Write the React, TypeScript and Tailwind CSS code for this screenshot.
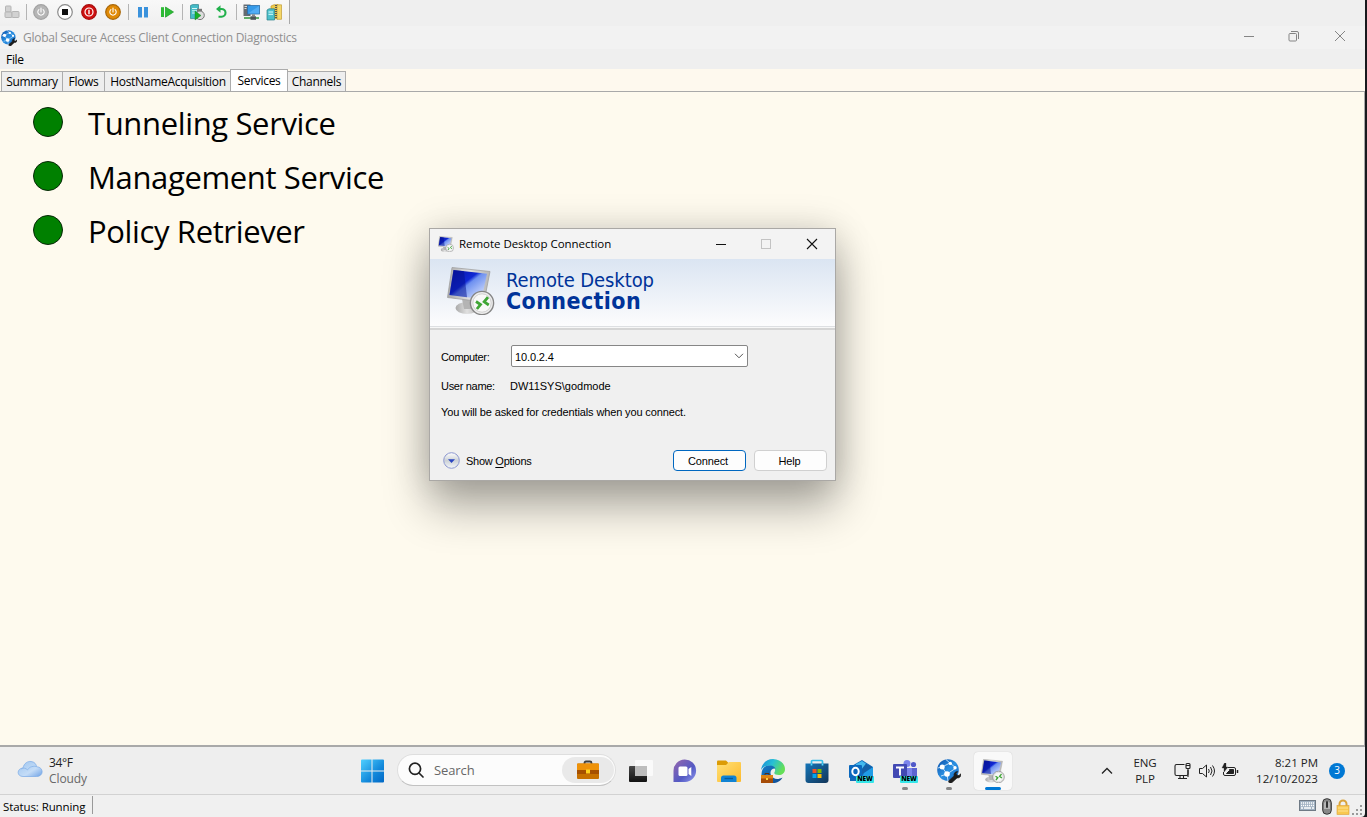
import React from "react";

type Kids = { children?: React.ReactNode };

const Cell = ({ children }: Kids) => (
  <div className="flex h-6 w-6 shrink-0 items-center justify-center">{children}</div>
);

const Sep = ({ wide = true }: { wide?: boolean }) => (
  <div className={wide ? "flex h-6 w-1.5 shrink-0 justify-center py-1" : "flex h-6 w-[5px] shrink-0 justify-center py-1"}>
    <div className="h-full w-px bg-[#b4b4b4]" />
  </div>
);

const PowerDisc = ({ ring, fill, mark }: { ring: string; fill: string; mark: "power" | "stop" | "circle" }) => (
  <svg width="16" height="16" viewBox="0 0 16 16">
    <circle cx="8" cy="8" r="7.3" fill={fill} stroke={ring} strokeWidth="1.2" />
    {mark === "stop" && <rect x="5" y="5" width="6" height="6" fill="#111" />}
    {mark === "power" && (
      <g fill="none" stroke="#fff" strokeWidth="1.1" strokeLinecap="round">
        <path d="M5.9 5.6a3.2 3.2 0 1 0 4.2 0" />
        <path d="M8 4v4" />
      </g>
    )}
    {mark === "circle" && (
      <g fill="none" stroke="#fff" strokeWidth="1.2">
        <circle cx="8" cy="8" r="4" />
        <path d="M8 5.8v4.4" strokeWidth="1.4" />
      </g>
    )}
  </svg>
);

const GlobeWrench = ({ size }: { size: number }) => (
  <svg width={size} height={size} viewBox="0 0 24 24">
    <defs>
      <linearGradient id="gw" x1="0" y1="0" x2="1" y2="1">
        <stop offset="0" stopColor="#0c4fa8" />
        <stop offset="0.5" stopColor="#2a90e2" />
        <stop offset="1" stopColor="#1669c4" />
      </linearGradient>
    </defs>
    <circle cx="11" cy="11" r="10.8" fill="url(#gw)" />
    <g stroke="#cfe6fa" fill="none" strokeWidth="0.9">
      <path d="M5 8 13 4 19 9 10 15 5 8M10 15 4 17M13 4 9 0.6M10 15l1 7M5 8 0.8 9" />
    </g>
    <g fill="#fff">
      <circle cx="5.2" cy="8" r="2.5" />
      <circle cx="13.3" cy="4.4" r="1.7" />
      <circle cx="10" cy="15" r="2.8" />
      <circle cx="18" cy="8.8" r="1.7" />
    </g>
    <path d="M12.5 23.8c-1-.3-1.2-1.6-.4-2.4l5-4.5c-.6-2.4 1-4.4 3.6-4.3l-1.6 2 .9 1.7 2 .2 1.8-1.8c.7 2.6-1.4 4.6-3.8 4.2l-5 4.6c-.7.6-1.7.6-2.5.3z" fill="#1c1c1c" stroke="#1c1c1c" strokeWidth=".7" />
  </svg>
);

const Rdp = ({ size, id }: { size: number; id: string }) => (
  <svg width={size} height={size} viewBox="0 0 48 48">
    <defs>
      <linearGradient id={id} x1="0" y1="0" x2="1" y2="1">
        <stop offset="0" stopColor="#0712a0" />
        <stop offset="0.42" stopColor="#1028d4" />
        <stop offset="0.5" stopColor="#6d90f0" />
        <stop offset="1" stopColor="#eef3ff" />
      </linearGradient>
      <linearGradient id={id + "b"} x1="0" y1="0" x2="1" y2="0">
        <stop offset="0" stopColor="#a9a9a9" />
        <stop offset="0.5" stopColor="#e0e0e0" />
        <stop offset="1" stopColor="#b6b6b6" />
      </linearGradient>
    </defs>
    <ellipse cx="20" cy="41" rx="11.5" ry="6" fill={`url(#${id}b)`} />
    <path d="M15 32h12l-2 10h-8z" fill="#b4b4b4" />
    <path d="M5 0.5 43 4.5 37 35 0.5 30.5z" fill={`url(#${id}b)`} stroke="#a0a0a0" strokeWidth=".8" />
    <path d="M6.5 3 40 6.8 34.6 32 2.5 28z" fill={`url(#${id})`} />
    <path d="M6.5 3 17 4.2 20 30.2 2.5 28z" fill="#04108e" opacity=".5" />
    <circle cx="35" cy="36" r="11.6" fill="#eee" stroke="#858585" strokeWidth="1.4" />
    <circle cx="35" cy="36" r="9.2" fill="#f8f8f8" stroke="#c6c6c6" strokeWidth=".8" />
    <path d="m29 34.5 4.5 3-3.6 4.5M41 30.2l-3.8 4.6 4.6 3.2" fill="none" stroke="#3fa535" strokeWidth="2.8" />
  </svg>
);

const Toolbar = () => (
  <div className="flex h-[26px] w-full shrink-0 bg-[#efefef]">
    <div className="flex h-6 w-[290px] items-start border-r border-[#a9a9a9] bg-gradient-to-b from-[#f8f8f8] to-[#f0f0f0]">
      <Cell>
        <svg width="16" height="14" viewBox="0 0 16 14" fill="#d2d2d2" stroke="#b5b5b5">
          <rect x="1.5" y="1" width="5.5" height="6" rx=".8" /><rect x="1" y="7" width="7" height="5.5" rx=".8" /><rect x="8" y="6.5" width="7" height="6" rx=".8" />
        </svg>
      </Cell>
      <Sep wide={false} />
      <Cell><PowerDisc ring="#a2a2a2" fill="#b5b5b5" mark="power" /></Cell>
      <Cell><PowerDisc ring="#8a8a8a" fill="#ffffff" mark="stop" /></Cell>
      <Cell><PowerDisc ring="#a80b0b" fill="#cf1111" mark="circle" /></Cell>
      <Cell><PowerDisc ring="#a8670a" fill="#e08a06" mark="power" /></Cell>
      <Sep />
      <Cell>
        <svg width="16" height="16" viewBox="0 0 16 16" fill="#3a92dc"><rect x="3" y="3" width="4" height="10.5" /><rect x="9" y="3" width="4" height="10.5" /></svg>
      </Cell>
      <Cell>
        <svg width="16" height="16" viewBox="0 0 16 16" fill="#2dbb35"><rect x="2" y="3.2" width="3" height="9.8" /><path d="M6.5 3 14.5 8 6.5 13.2z" stroke="#189a22" strokeWidth=".7" /></svg>
      </Cell>
      <Sep />
      <Cell>
        <svg width="16" height="17" viewBox="0 0 16 17">
          <path d="M1.5 1.5 3.5.6h6v14h-8z" fill="#45bcc8" stroke="#2b8089" strokeWidth=".7" />
          <path d="M3 4.5h5M3 6.8h5M3 9h3" stroke="#d7f7f5" />
          <rect x="8" y="4.8" width="5" height="3" fill="#777" />
          <circle cx="11" cy="11.3" r="4.3" fill="#ddd" stroke="#777" />
          <path d="M6 7 12 11.5 6 16z" fill="#18b028" stroke="#117a1b" strokeWidth=".4" />
        </svg>
      </Cell>
      <Cell>
        <svg width="16" height="16" viewBox="0 0 16 16"><path d="M6.500 5h2c2.200 0 4 1.500 4 3.800S10.700 12.700 8.500 12.700H5.500" fill="none" stroke="#22b14c" strokeWidth="2.1" /><path d="M7.500 1.200v7.600L3 5z" fill="#22b14c" /></svg>
      </Cell>
      <Sep />
      <Cell>
        <svg width="17" height="16" viewBox="0 0 17 16">
          <path d="M.5 .5h7v11.500h-7z" fill="#656b70" /><path d="M1.500 2.500h2.500M1.500 4.500h2" stroke="#ddd" />
          <rect x="4.5" y="1.5" width="12" height="8.5" fill="#3499e8" stroke="#2b6ea8" strokeWidth=".8" />
          <path d="M5 9.500 16 2v7.500z" fill="#70c0ff" opacity=".5" />
          <path d="M9 10.300h3v2H9z" fill="#888" /><path d="M1 14h15" stroke="#3b9a45" strokeWidth="1.6" /><rect x="7.5" y="12.3" width="5.5" height="3.5" fill="#4d5458" />
        </svg>
      </Cell>
      <Cell>
        <svg className="-translate-x-px" width="17" height="17" viewBox="0 0 17 17">
          <path d="M5 2 8 .7h4v14H5z" fill="#edc949" stroke="#b98f1e" strokeWidth=".6" /><path d="M11 .8h4.500v14.500H11z" fill="#f5d867" stroke="#b98f1e" strokeWidth=".6" />
          <path d="M10 1v14" stroke="#555" strokeWidth="2" strokeDasharray="1 1" />
          <path d="M1 6 3 4.800h5.500V16H1z" fill="#4cbfca" stroke="#2d8088" strokeWidth=".7" /><path d="M2.500 8h4.500M2.500 10.300h4.500" stroke="#dcffff" />
        </svg>
      </Cell>
    </div>
  </div>
);

const TitleBar = () => (
  <div className="flex h-[23px] w-full shrink-0 items-center bg-[#f2f2f2] pl-px">
    <GlobeWrench size={16} />
    <span className="ml-1.5 whitespace-nowrap pt-px text-[12px] tracking-[-0.26px] text-[#909090]">Global Secure Access Client Connection Diagnostics</span>
    <div className="ml-auto flex items-center pb-[3px] pr-[19px] text-[#858585]">
      <svg width="12" height="12" viewBox="0 0 12 12" stroke="currentColor"><path d="M1 6.500h10" /></svg>
      <svg className="ml-[33px]" width="12" height="12" viewBox="0 0 12 12" fill="none" stroke="currentColor"><rect x="1" y="3.5" width="7.5" height="7.5" rx="1" /><path d="M3 1.500h6a1.500 1.500 0 0 1 1.500 1.500v6" /></svg>
      <svg className="ml-[34px]" width="12" height="12" viewBox="0 0 12 12" stroke="currentColor"><path d="m1 1 10 10M11 1 1 11" /></svg>
    </div>
  </div>
);

const Tabs = () => (
  <div className="flex h-[22px] w-full shrink-0 items-end bg-[#fef9ee] pl-px text-[12px] tracking-[-0.3px] text-black">
    <div className="flex h-5 w-[62px] items-center justify-center border border-b-0 border-[#acacac] bg-[#eeeeee]">Summary</div>
    <div className="flex h-5 w-[42px] items-center justify-center border border-b-0 border-l-0 border-[#acacac] bg-[#eeeeee]">Flows</div>
    <div className="flex h-5 w-[125px] items-center justify-center border border-x-0 border-b-0 border-[#acacac] bg-[#eeeeee] pl-px">HostNameAcquisition</div>
    <div className="-mb-px flex h-[23px] w-[58px] items-center justify-center border border-b-0 border-[#acacac] bg-white">Services</div>
    <div className="flex h-5 w-[58px] items-center justify-center border border-b-0 border-l-0 border-[#acacac] bg-[#eeeeee]">Channels</div>
  </div>
);

const Service = ({ name }: { name: string }) => (
  <div className="flex h-[54px] items-center">
    <div className="h-[30px] w-[30px] rounded-full border border-[#082808] bg-[#008000]" />
    <span className="ml-[25px] whitespace-nowrap pt-0.5 text-[31px] leading-[40px] tracking-[-0.36px] text-black">{name}</span>
  </div>
);

const Dialog = () => (
  <div className="absolute left-[429px] top-[228px] flex h-[253px] w-[407px] flex-col border border-[#aaa8a5] bg-[#f0f0f0] font-['Liberation_Sans',sans-serif] text-[11px] tracking-[-0.13px] text-black shadow-[0_26px_42px_rgba(0,0,0,0.32),0_0_34px_rgba(0,0,0,0.15)]">
    <div className="flex h-[30px] shrink-0 items-center bg-[#f3f3f3] pl-2">
      <Rdp size={16} id="rd16" />
      <span className="ml-[5px] whitespace-nowrap font-['Open_Sans',sans-serif] text-[11.5px] tracking-[-0.04px]">Remote Desktop Connection</span>
      <div className="ml-auto flex items-center pb-px pr-[17px]">
        <svg width="12" height="12" viewBox="0 0 12 12" stroke="#111"><path d="M1 6.500h10" /></svg>
        <svg className="ml-[33px]" width="12" height="12" viewBox="0 0 12 12" fill="none" stroke="#c3c3c3"><rect x="1.5" y="1.5" width="9" height="9" /></svg>
        <svg className="ml-[34px]" width="12" height="12" viewBox="0 0 12 12" stroke="#111" strokeWidth="1.1"><path d="m1 1 10 10M11 1 1 11" /></svg>
      </div>
    </div>
    <div className="flex h-[67px] shrink-0 bg-gradient-to-b from-[#dbe5f2] to-[#fcfcfd] pl-[17px] pt-2">
      <Rdp size={48} id="rd48" />
      <div className="ml-[11px] flex flex-col whitespace-nowrap pt-0.5 font-['DejaVu_Sans_Condensed','DejaVu_Sans',sans-serif] text-[#003399]">
        <span className="text-[20px] leading-[22px] tracking-[-0.1px]">Remote Desktop</span>
        <span className="text-[23px] font-bold leading-[21px] tracking-[0.4px]">Connection</span>
      </div>
    </div>
    <div className="h-1 shrink-0 border-b-2 border-t border-b-[#d5d5d5] border-t-[#dddfe2] bg-[#f7f7f7]" />
    <div className="flex flex-1 flex-col pl-[11px] pr-2">
      <div className="mt-[15px] flex h-[22px] items-center">
        <span className="w-[70px] pt-0.5 tracking-[-0.33px]">Computer:</span>
        <div className="flex h-[22px] w-[237px] items-center justify-between rounded-[2px] border border-[#868686] bg-white pl-[3px] pr-[3px]">
          <span className="pt-0.5">10.0.2.4</span>
          <svg width="10" height="6" viewBox="0 0 10 6" fill="none" stroke="#555"><path d="m1 .8 4 4 4-4" /></svg>
        </div>
      </div>
      <div className="mt-[11px] flex h-4 items-center"><span className="w-[69px] tracking-[-0.3px]">User name:</span><span className="tracking-normal">DW11SYS\godmode</span></div>
      <div className="mt-2.5 h-4 whitespace-nowrap leading-4">You will be asked for credentials when you connect.</div>
      <div className="mt-[29px] flex h-[22px] items-center">
        <svg className="ml-0.5" width="17" height="17" viewBox="0 0 17 17">
          <defs><linearGradient id="opt" x1="0" y1="0" x2="0" y2="1"><stop offset="0" stopColor="#fff" /><stop offset=".5" stopColor="#ccd1d6" /><stop offset="1" stopColor="#f4f7fa" /></linearGradient></defs>
          <circle cx="8.5" cy="8.5" r="7.8" fill="url(#opt)" stroke="#8c97cf" /><path d="M5 7.300h7L8.500 11z" fill="#2a46c0" />
        </svg>
        <span className="ml-1.5 whitespace-nowrap pt-0.5 tracking-[-0.25px]">Show <span className="underline underline-offset-2">O</span>ptions</span>
        <button className="ml-auto h-[21px] w-[73px] rounded-[4px] border border-[#0067c0] bg-[#fdfdfd] pr-[3px] pt-0.5">Connect</button>
        <button className="ml-2 h-[21px] w-[73px] rounded-[4px] border border-[#d0d0d0] bg-[#fdfdfd] pr-0.5 pt-0.5">Help</button>
      </div>
    </div>
  </div>
);

const Task = ({ children, active, dot }: Kids & { active?: boolean; dot?: boolean }) => (
  <div className="relative flex h-12 w-11 shrink-0 items-center justify-center">
    {active && <div className="absolute left-[3px] top-[5px] h-[38px] w-[38px] rounded bg-[#f9f9f9] shadow-[0_0_1px_#bbb]" />}
    <div className="relative">{children}</div>
    {dot && <div className="absolute left-[19px] top-10 h-[3px] w-1.5 rounded-full bg-[#868686]" />}
    {active && <div className="absolute left-[14px] top-10 h-[3px] w-4 rounded-full bg-[#0078d4]" />}
  </div>
);

const NewBadge = () => (
  <span className="absolute left-2 top-[17px] flex h-[7px] w-[18px] items-center justify-center rounded-[1px] bg-[#35e5e8] text-[6.5px] font-extrabold leading-none text-black">NEW</span>
);

const Taskbar = () => (
  <div className="flex h-12 w-full shrink-0 border-b border-[#d2d2d2] bg-[#eeeeee] text-[12px]">
    <div className="flex w-[360px] items-center pl-[17px]">
      <svg className="mb-1" width="26" height="18" viewBox="0 0 26 18">
        <defs><linearGradient id="cl" x1="0" y1="0" x2="1" y2="1"><stop offset="0" stopColor="#9cc4ee" /><stop offset=".6" stopColor="#c4dcf7" /><stop offset="1" stopColor="#6fa2e5" /></linearGradient></defs>
        <path d="M6 16.500C-.500 16.500-.500 8.500 6 8 7 3 11 1 14 1.500c3.500.200 5.500 3 5.500 5.200C27 7 27 16.500 19.500 16.500z" fill="url(#cl)" stroke="#78a9e6" strokeWidth=".7" />
        <path d="M4 9c2-1.500 5-1 6.500 1 1-2 4-4.500 9-3.500" fill="none" stroke="#87b2e8" strokeWidth=".8" />
      </svg>
      <div className="ml-1.5 flex flex-col leading-4"><span className="tracking-[-0.35px] text-[#222]">34°F</span><span className="tracking-[-0.1px] text-[#686868]">Cloudy</span></div>
    </div>
    <div className="flex w-[37px] items-center">
      <svg width="24" height="24" viewBox="0 0 24 24">
        <defs><linearGradient id="win" x1="0" y1="0" x2="1" y2="1"><stop offset="0" stopColor="#4fd0ff" /><stop offset=".6" stopColor="#1389db" /><stop offset="1" stopColor="#0067c5" /></linearGradient></defs>
        <path d="M1 1.500q0-1 1-1h9.500V11.500H1zM12.500.500H23q1 0 1 1v10H12.500zM1 12.500h10.500V23.500H2q-1 0-1-1zM12.500 12.500H24V22.500q0 1-1 1H12.500z" fill="url(#win)" />
      </svg>
    </div>
    <div className="mb-2 mt-[7px] flex h-8 w-[219px] items-center rounded-full border border-[#dedede] border-b-[#c2c2c2] bg-[#fcfcfc] pl-2.5 pr-px">
      <svg width="16" height="16" viewBox="0 0 16 16" fill="none" stroke="#222" strokeWidth="1.7"><circle cx="7" cy="6.8" r="5.6" /><path d="m11 11 4 4" strokeLinecap="round" /></svg>
      <span className="ml-2.5 pt-px text-[13px] tracking-[-0.1px] text-[#676767]">Search</span>
      <div className="ml-auto flex h-[26px] w-[52px] items-center justify-center rounded-full bg-[#e9e9e9]">
        <svg width="24" height="20" viewBox="0 0 24 20">
          <path d="M8.500 4V3q0-1.500 1.500-1.500h4q1.500 0 1.500 1.500v1" fill="none" stroke="#3f3f3f" strokeWidth="1.8" />
          <rect x="1" y="3.5" width="22" height="15.5" rx="1" fill="#c67000" /><path d="M1 11V4.500q0-1 1-1h20q1 0 1 1V11z" fill="#ee9209" /><path d="M1 10h22v4H1z" fill="#a65000" /><rect x="10" y="9.5" width="4" height="4" fill="#ffd21f" />
        </svg>
      </div>
    </div>
    <div className="ml-[3px] flex">
      <Task>
        <svg width="26" height="24" viewBox="0 0 26 24">
          <defs><linearGradient id="tv" x1="0" y1="0" x2="0" y2="1"><stop offset="0" stopColor="#484848" /><stop offset="1" stopColor="#111" /></linearGradient></defs>
          <rect x="1" y="7" width="18" height="16" rx="1" fill="url(#tv)" /><rect x="7" y="1" width="18" height="16" rx="1" fill="#fafafa" /><path d="M7 7h12v10H7z" fill="#bdbdbd" />
        </svg>
      </Task>
      <Task>
        <svg width="24" height="24" viewBox="0 0 24 24">
          <defs><linearGradient id="ch" x1="0" y1="0" x2="1" y2="1"><stop offset="0" stopColor="#9867ad" /><stop offset=".6" stopColor="#545ac4" /><stop offset="1" stopColor="#929bf0" /></linearGradient></defs>
          <path d="M.500 23V12A11.300 11.300 0 1 1 12 23z" fill="url(#ch)" /><rect x="5.5" y="7.5" width="9" height="9.5" rx="1.5" fill="#fff" /><path d="m15.500 10 2.800-2v9l-2.800-2z" fill="#fff" />
        </svg>
      </Task>
      <Task>
        <svg width="26" height="24" viewBox="0 0 26 24">
          <defs><linearGradient id="fo" x1="0" y1="0" x2="1" y2="1"><stop offset="0" stopColor="#ffe177" /><stop offset="1" stopColor="#fdb92b" /></linearGradient></defs>
          <path d="M1 2.500q0-1 1-1h8l3 3v5H1z" fill="#dc9c05" /><path d="M1 6h9l3-3h11q1 0 1 1v18q0 1-1 1H2q-1 0-1-1z" fill="url(#fo)" /><path d="M5 23v-4q0-2.500 2.500-2.500h10.500q2.500 0 2.500 2.500v4z" fill="#1183d3" /><path d="M8.500 19.500h8.500" stroke="#075b9c" strokeWidth="1.3" />
        </svg>
      </Task>
      <Task>
        <svg width="26" height="26" viewBox="0 0 26 26">
          <defs>
            <linearGradient id="e1" x1="0" y1="0" x2="1" y2=".4"><stop offset="0" stopColor="#1688d8" /><stop offset=".5" stopColor="#27bfd5" /><stop offset="1" stopColor="#64df58" /></linearGradient>
            <linearGradient id="e2" x1="0" y1="0" x2="1" y2="1"><stop offset="0" stopColor="#147bc7" /><stop offset="1" stopColor="#114b91" /></linearGradient>
          </defs>
          <path d="M1 12c1-7 6-11 12-11 7 0 12 5 12 10 0 4-3 6-6 6-3.500 0-5.500-1-4.500-2.700 1-1.500 1.500-5.300-3.500-6.300-5-1-8 1-10 4z" fill="url(#e1)" />
          <path d="M1.500 16C2 9 6 7.500 10 7.500c3 0 5 1.500 5.500 3-4-.5-6 3-4.500 6.500s6 5.500 11.500 2.500C21 23 17 25 13 25 6 25 1 21 1.500 16z" fill="url(#e2)" />
          <rect x="1" y="17" width="12" height="8" fill="#a64c07" /><path d="M1 17h12v3.500H1z" fill="#dd8313" /><path d="M5 17v-1.500h4V17" fill="none" stroke="#553019" /><path d="M6 20h2v2H6z" fill="#ffd23f" />
        </svg>
      </Task>
      <Task>
        <svg width="24" height="24" viewBox="0 0 24 24">
          <defs><linearGradient id="st" x1="0" y1="0" x2="1" y2="1"><stop offset="0" stopColor="#1575b8" /><stop offset="1" stopColor="#123558" /></linearGradient></defs>
          <path d="M6.500 8V2.500q0-1 1-1h9q1 0 1 1V8" fill="none" stroke="#32bde9" strokeWidth="1.7" /><path d="M.500 4.500h23V21q0 3-3 3h-17q-3 0-3-3z" fill="url(#st)" /><path d="M6.500 4.500v2M17.500 4.500v2" stroke="#54dcff" strokeWidth="1.7" />
          <path d="M7.500 10h4v4h-4z" fill="#f25022" /><path d="M12.500 10h4v4h-4z" fill="#7fba00" /><path d="M7.500 15h4v4h-4z" fill="#00a4ef" /><path d="M12.500 15h4v4h-4z" fill="#ffb900" />
        </svg>
      </Task>
      <Task>
        <svg width="26" height="24" viewBox="0 0 26 24"><path d="M2 8 14 1l11 7v14H2z" fill="#126ab8" /><path d="M8 5 14 2l9 6-9 6-7-5z" fill="#43b8ee" /><path d="M18 4.500 25 8.500 14 15 13 11z" fill="#1560a8" /><path d="m16 14 9-6v14H12z" fill="#1f9ce6" /><rect x="1" y="6" width="13" height="13" rx="1" fill="#0b68bd" /><ellipse cx="7.5" cy="12.5" rx="3.2" ry="3.8" fill="none" stroke="#fff" strokeWidth="2" /></svg>
        <NewBadge />
      </Task>
      <Task dot>
        <svg width="26" height="24" viewBox="0 0 26 24"><circle cx="15" cy="4.5" r="3.5" fill="#7b83eb" /><circle cx="21.5" cy="5.5" r="2.6" fill="#5059c9" /><path d="M17 9h8v8q0 4-5 4h-3z" fill="#5d64d1" /><path d="M9 9h11v10q-2 5-8 3z" fill="#7b83eb" /><rect x="1" y="5" width="14" height="14" rx="1" fill="#4249b3" /><path d="M4 8.500h8M8 8.500v8" stroke="#fff" strokeWidth="1.9" /></svg>
        <NewBadge />
      </Task>
      <Task dot><GlobeWrench size={24} /></Task>
      <Task active><Rdp size={24} id="rd24" /></Task>
    </div>
    <div className="ml-auto flex items-center text-[#222]">
      <svg width="12" height="8" viewBox="0 0 12 8" fill="none" stroke="#222" strokeWidth="1.3"><path d="m1 6.500 5-5 5 5" /></svg>
      <div className="ml-5 flex w-6 flex-col items-center pt-px text-[11.5px] leading-4 tracking-[-0.1px]"><span>ENG</span><span>PLP</span></div>
      <svg className="ml-[17px]" width="18" height="18" viewBox="0 0 18 18" fill="none" stroke="#222" strokeWidth="1.1"><path d="M10.500 2.500h-8q-1.500 0-1.500 1.500v8q0 1.500 1.500 1.500h10q1.500 0 1.500-1.500V8M6 13.500v3M9.500 13.500v3M4 16.500h9" /><rect x="12" y="1.5" width="4" height="5" rx="1" /><path d="M14 6.500V15M12 3.500h4" /></svg>
      <svg className="ml-1.5" width="18" height="16" viewBox="0 0 18 16" fill="none" stroke="#222" strokeWidth="1"><path d="M1.500 5.500h3l4-3.500v12l-4-3.500h-3zM10.500 6q1.500 2 0 4M12.500 4q3 4 0 8M14.500 2.500q4 5.500 0 11" /></svg>
      <svg className="ml-[5px]" width="18" height="16" viewBox="0 0 18 16" fill="none" stroke="#222"><path d="M7 4.500h6q1.500 0 1.500 1.500v5q0 1.500-1.500 1.500H4q-1.500 0-1.500-1.500V9" /><path d="M8.500 6.500h4v4H5.500l3-3z" fill="#222" /><path d="M16.500 7v3" strokeWidth="1.5" /><path d="M3.500 0 1 5h2v4l4-5H5V0z" fill="#222" strokeWidth=".3" /></svg>
      <div className="ml-[15px] flex w-[64px] flex-col items-end whitespace-nowrap pt-px text-[11.5px] leading-4"><span>8:21 PM</span><span className="tracking-[0.1px]">12/10/2023</span></div>
      <div className="ml-[11px] mr-5 flex h-4 w-4 items-center justify-center rounded-full bg-[#0078d4] text-[10px] text-white">3</div>
    </div>
  </div>
);

const StatusBar = () => (
  <div className="flex h-[22px] w-full items-center bg-[#f0f0f0] pl-[3px] text-[12px] text-black">
    <span className="w-[89px] whitespace-nowrap pt-0.5 text-[11.5px] tracking-[-0.1px]">Status: Running</span>
    <div className="mb-[3px] h-[18px] w-px bg-[#999]" />
    <div className="ml-auto flex items-end">
      <svg className="mb-[3px]" width="17" height="12" viewBox="0 0 17 12"><rect x=".5" y=".5" width="16" height="10" fill="#9fb0c0" stroke="#6f7a85" /><path d="M2 3h13M2 5.500h13" stroke="#fff" strokeWidth="1.3" strokeDasharray="1.2 .8" /><path d="M2 8h2m1 0h7m1 0h2" stroke="#fff" strokeWidth="1.3" /></svg>
      <svg className="ml-1.5" width="10" height="17" viewBox="0 0 10 17"><rect x=".7" y=".7" width="8.6" height="15.5" rx="4" fill="#888" stroke="#333" /><path d="M2 5q3-4 6 0v6H2z" fill="#b6b6b6" /><rect x="4" y="3" width="2" height="7" rx="1" fill="#333" /></svg>
      <svg className="ml-1" width="14" height="16" viewBox="0 0 14 16"><path d="M3.500 7V5a3.500 3.500 0 0 1 7 0v2" fill="none" stroke="#d9a33b" strokeWidth="2" /><rect x="1" y="6.5" width="12" height="9" fill="#f8c850" stroke="#dca13a" strokeWidth=".6" /><path d="M2 9h10M2 12h10" stroke="#ffe291" /></svg>
      <svg className="-mb-px ml-0.5 mr-0.5" width="11" height="13" viewBox="0 0 11 13" fill="#999"><path d="M8 2h2v2H8zM4 6h2v2H4zM8 6h2v2H8zM0 10h2v2H0zM4 10h2v2H4zM8 10h2v2H8z" /></svg>
    </div>
  </div>
);

export default function App() {
  return (
    <div className="relative flex h-[817px] w-[1367px] overflow-hidden bg-[#18191d] font-['Open_Sans','Noto_Sans',sans-serif]">
      <div className="flex w-[1365px] flex-col overflow-hidden rounded-br-[4px]">
        <Toolbar />
        <TitleBar />
        <div className="flex h-5 w-full shrink-0 items-center bg-[#efefef] pl-1.5 pt-0.5 text-[12px] tracking-[-0.3px] text-black">File</div>
        <Tabs />
        <div className="flex h-[656px] w-full shrink-0 flex-col border-b-2 border-r border-t border-[#a9a9a9] bg-[#fefaee] pl-[33px] pt-[3px]">
          <Service name="Tunneling Service" />
          <Service name="Management Service" />
          <Service name="Policy Retriever" />
        </div>
        <Taskbar />
        <StatusBar />
      </div>
      <Dialog />
    </div>
  );
}
